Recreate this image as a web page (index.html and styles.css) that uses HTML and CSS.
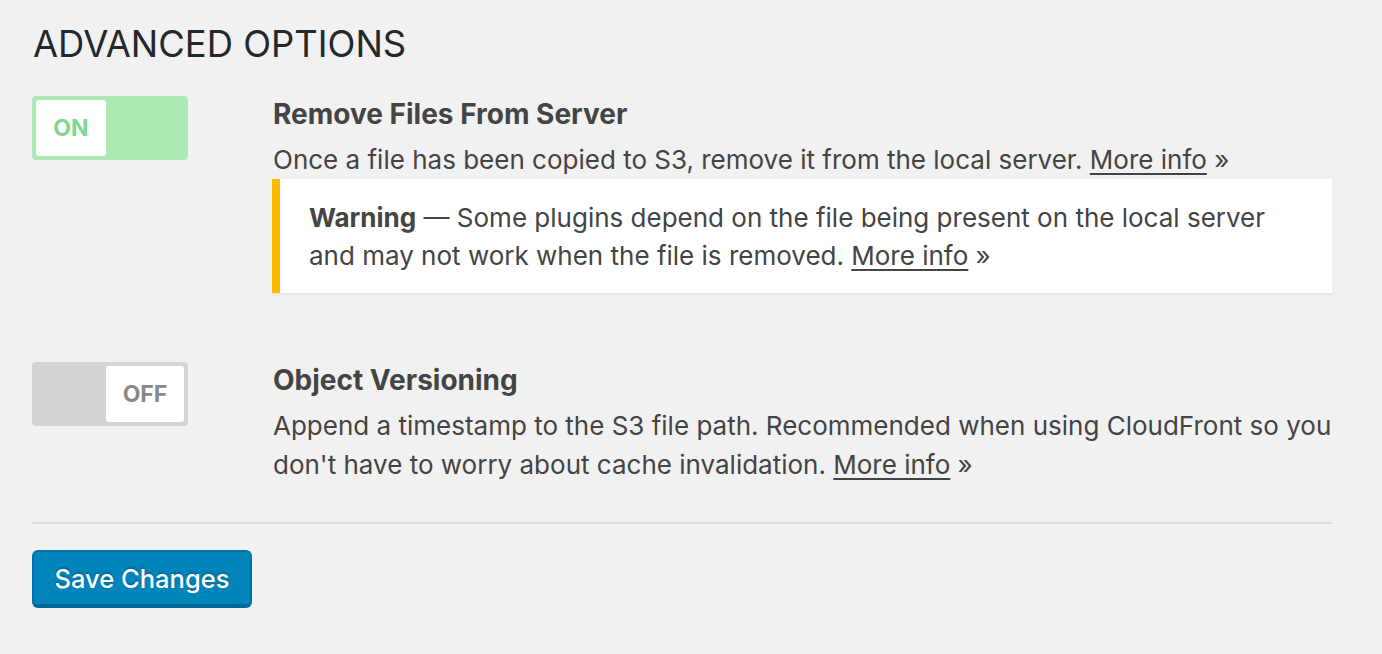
FILE: index.html
```html
<!DOCTYPE html>
<html>
<head>
<meta charset="utf-8">
<link rel="stylesheet" href="styles.css">
</head>
<body>
<div class="wrap">
  <h2 class="heading">ADVANCED OPTIONS</h2>

  <div class="option option-first">
    <div class="switch-col">
      <div class="switch switch-on"><span class="knob">ON</span></div>
    </div>
    <div class="detail">
      <h4 class="title">Remove Files From Server</h4>
      <p class="desc">Once a file has been copied to S3, remove it from the local server. <a href="#">More info</a> &raquo;</p>
      <div class="notice">
        <p><strong>Warning</strong> &mdash; Some plugins depend on the file being present on the local server and may not work when the file is removed. <a href="#">More info</a> &raquo;</p>
      </div>
    </div>
  </div>

  <div class="option option-second">
    <div class="switch-col">
      <div class="switch switch-off"><span class="knob">OFF</span></div>
    </div>
    <div class="detail">
      <h4 class="title">Object Versioning</h4>
      <p class="desc">Append a timestamp to the S3 file path. Recommended when using CloudFront so you don't have to worry about cache invalidation. <a href="#">More info</a> &raquo;</p>
    </div>
  </div>

  <hr class="sep">

  <button class="save">Save Changes</button>
</div>
</body>
</html>
```

FILE: styles.css
```css
html, body {
  margin: 0;
  padding: 0;
  background: #f1f1f1;
}
body {
  font-family: Inter, "Noto Sans", sans-serif;
  color: #444;
  font-size: 26px;
  line-height: 39px;
}
.wrap {
  padding: 0 50px 0 32px;
  width: 1300px;
}
.heading {
  margin: 0;
  padding-top: 22px;
  font-size: 36.4px;
  line-height: 44px;
  font-weight: 400;
  color: #23282d;
  padding-left: 1px;
}
.option {
  display: flex;
}
.option-first {
  margin-top: 29px;
}
.option-second {
  margin-top: 68px;
}
.switch-col {
  flex: 0 0 241px;
}
.switch {
  width: 156px;
  height: 64px;
  box-sizing: border-box;
  border-radius: 4px;
  padding: 4px;
  display: flex;
  margin-top: 1px;
}
.switch-on {
  background: #ade8b5;
  justify-content: flex-start;
}
.switch-off {
  background: #d4d4d4;
  justify-content: flex-end;
}
.knob {
  background: #fff;
  border-radius: 3px;
  height: 56px;
  display: flex;
  align-items: center;
  justify-content: center;
  font-size: 23px;
  font-weight: 700;
}
.switch-on .knob {
  color: #80d78f;
  width: 70px;
}
.switch-off .knob {
  color: #888;
  width: 78px;
}
.detail {
  flex: 1;
}
.title {
  margin: 0;
  font-size: 28px;
  font-weight: 700;
  line-height: 39px;
  color: #444;
}
.desc {
  margin: 6px 0 0;
}
a {
  color: #444;
  text-decoration: underline;
  text-underline-offset: 4px;
}
.notice {
  background: #fff;
  border-left: 8px solid #ffb900;
  box-shadow: 0 2px 2px rgba(0,0,0,0.05);
  padding: 20px 29px 18px;
  margin-left: -1px;
}
.notice p {
  margin: 0;
  line-height: 38px;
}
.notice strong {
  font-weight: 700;
}
.sep {
  border: 0;
  height: 2px;
  background: #dddddd;
  margin: 38px 0 0;
}
.save {
  margin-top: 26px;
  width: 220px;
  height: 58px;
  background: #0085ba;
  border: 2px solid #0073aa;
  border-bottom: 4px solid #006799;
  border-radius: 6px;
  color: #fff;
  font-family: Inter, "Noto Sans", sans-serif;
  font-size: 25.5px;
  font-weight: 500;
  text-shadow: 0 -2px 2px #006799;
  padding: 0;
}
```
